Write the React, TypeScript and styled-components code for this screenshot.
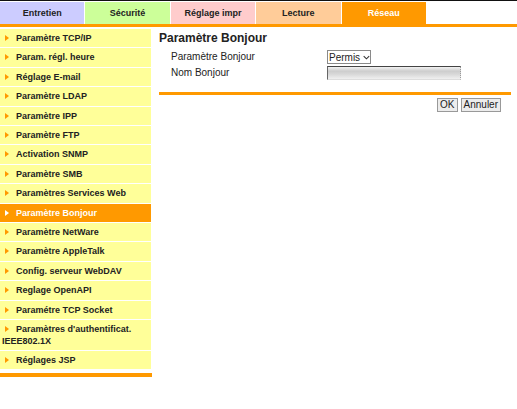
import React from "react";
import styled, { createGlobalStyle } from "styled-components";

const GlobalStyle = createGlobalStyle`
  html, body {
    margin: 0;
    padding: 0;
    background: #fff;
  }
  body {
    font-family: "Liberation Sans", Arial, sans-serif;
    color: #222;
  }
`;

const ORANGE = "#ff9900";

const tabs = [
  { label: "Entretien", bg: "#ccccff" },
  { label: "Sécurité", bg: "#ccff99" },
  { label: "Réglage impr", bg: "#ffcccc" },
  { label: "Lecture", bg: "#ffcc99" },
  { label: "Réseau", bg: ORANGE, active: true },
];

const menu = [
  "Paramètre TCP/IP",
  "Param. régl. heure",
  "Réglage E-mail",
  "Paramètre LDAP",
  "Paramètre IPP",
  "Paramètre FTP",
  "Activation SNMP",
  "Paramètre SMB",
  "Paramètres Services Web",
  "Paramètre Bonjour",
  "Paramètre NetWare",
  "Paramètre AppleTalk",
  "Config. serveur WebDAV",
  "Reglage OpenAPI",
  "Paramétre TCP Socket",
  "Paramètres d'authentificat. IEEE802.1X",
  "Réglages JSP",
];

const Page = styled.div`
  width: 517px;
  border-top: 1px solid #111;
`;

const TabBar = styled.div`
  display: flex;
  gap: 1px;
  padding-top: 1px;
`;

const Tab = styled.div<{ $bg: string; $active?: boolean }>`
  width: 84.4px;
  height: 22px;
  display: flex;
  align-items: center;
  justify-content: center;
  background: ${(p) => p.$bg};
  color: ${(p) => (p.$active ? "#fff" : "#222")};
  font-size: 9px;
  font-weight: bold;
`;

const OrangeRule = styled.div`
  height: 3px;
  background: ${ORANGE};
`;

const Body = styled.div`
  display: flex;
  gap: 7px;
  margin-top: 2px;
`;

const Sidebar = styled.div`
  width: 152px;
  display: flex;
  flex-direction: column;
`;

const MenuItem = styled.div<{ $active?: boolean }>`
  width: 151px;
  box-sizing: border-box;
  margin-bottom: 1px;
  padding: 4px 2px 3px;
  line-height: 11.4px;
  font-size: 9px;
  font-weight: bold;
  background: ${(p) => (p.$active ? ORANGE : "#ffff99")};
  color: ${(p) => (p.$active ? "#fff" : "#222")};
`;

const Arrow = styled.span<{ $active?: boolean }>`
  display: inline-block;
  width: 0;
  height: 0;
  margin: 0 7px 0 3px;
  border-top: 3px solid transparent;
  border-bottom: 3px solid transparent;
  border-left: 4px solid ${(p) => (p.$active ? "#fff" : ORANGE)};
  vertical-align: 0px;
`;

const SideBar = styled.div`
  margin-top: 3px;
  height: 4px;
  background: ${ORANGE};
`;

const Main = styled.div`
  width: 352px;
  padding-top: 1px;
  display: flex;
  flex-direction: column;
`;

const Title = styled.div`
  font-size: 12px;
  font-weight: bold;
  line-height: 16px;
`;

const Settings = styled.div`
  margin-top: 4px;
  padding-left: 12px;
  display: grid;
  grid-template-columns: 156px 1fr;
  row-gap: 2px;
  align-items: center;
`;

const Label = styled.div`
  font-size: 10px;
  line-height: 14px;
`;

const SelectBox = styled.div`
  width: 44px;
  height: 14px;
  box-sizing: border-box;
  border: 1px solid #8a8a8a;
  display: flex;
  align-items: center;
  gap: 3px;
  padding-left: 1px;
  font-size: 10px;
  background: #fff;
`;

const NameInput = styled.div`
  width: 134px;
  height: 14px;
  box-sizing: border-box;
  border-top: 1px solid #444;
  border-left: 1px solid #666;
  border-right: 1px dotted #999;
  border-bottom: 1px solid #ddd;
  background: linear-gradient(
    to bottom,
    #f2f2f2 0%,
    #cdcdcd 35%,
    #d8d8d8 60%,
    #f0f0f0 100%
  );
`;

const MainRule = styled.div`
  margin-top: 12px;
  height: 3px;
  background: ${ORANGE};
`;

const Actions = styled.div`
  margin-top: 3px;
  padding-right: 10px;
  display: flex;
  justify-content: flex-end;
  gap: 3px;
`;

const Button = styled.button`
  height: 14px;
  padding: 0 2px;
  box-sizing: border-box;
  border: 1px solid #999;
  background: #ececec;
  font-family: "Liberation Sans", Arial, sans-serif;
  font-size: 10px;
  line-height: 12px;
  color: #222;
`;

const Chevron = () => (
  <svg width="10" height="7" viewBox="0 0 10 7">
    <path d="M1 1.5 L5 5.5 L9 1.5" fill="none" stroke="#333" strokeWidth="1.5" />
  </svg>
);

export default function App() {
  return (
    <Page>
      <GlobalStyle />
      <TabBar>
        {tabs.map((t) => (
          <Tab key={t.label} $bg={t.bg} $active={t.active}>
            {t.label}
          </Tab>
        ))}
      </TabBar>
      <OrangeRule />
      <Body>
        <Sidebar>
          {menu.map((m) => {
            const active = m === "Paramètre Bonjour";
            return (
              <MenuItem key={m} $active={active}>
                <Arrow $active={active} />
                {m}
              </MenuItem>
            );
          })}
          <SideBar />
        </Sidebar>
        <Main>
          <Title>Paramètre Bonjour</Title>
          <Settings>
            <Label>Paramètre Bonjour</Label>
            <SelectBox>
              Permis
              <Chevron />
            </SelectBox>
            <Label>Nom Bonjour</Label>
            <NameInput />
          </Settings>
          <MainRule />
          <Actions>
            <Button>OK</Button>
            <Button>Annuler</Button>
          </Actions>
        </Main>
      </Body>
    </Page>
  );
}
